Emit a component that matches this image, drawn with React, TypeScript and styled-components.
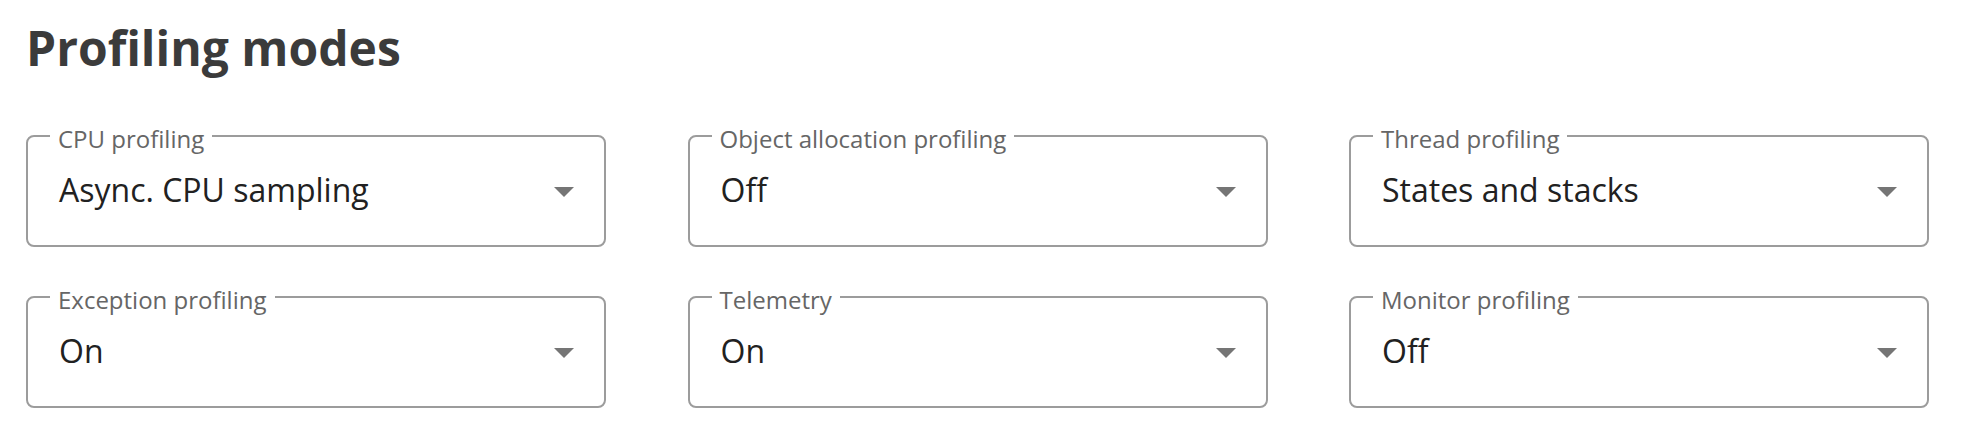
import React from "react";
import styled, { createGlobalStyle } from "styled-components";

const GlobalStyle = createGlobalStyle`
  html, body {
    margin: 0;
    padding: 0;
    background: #ffffff;
  }
  body {
    font-family: "Open Sans", "Noto Sans", sans-serif;
  }
`;

const Page = styled.main`
  padding: 19px 26px 0;
  box-sizing: border-box;
  width: 100%;
`;

const Heading = styled.h2`
  margin: 0;
  font-family: "Open Sans", sans-serif;
  font-weight: 700;
  font-size: 48px;
  line-height: 58px;
  color: #3b3b3b;
`;

const Grid = styled.div`
  margin-top: 44px;
  display: grid;
  grid-template-columns: repeat(3, 580px);
  column-gap: 81.5px;
  row-gap: 35px;
`;

const Field = styled.fieldset`
  margin: 0;
  padding: 0;
  min-width: 0;
  border: 2px solid #9c9c9c;
  border-radius: 8px;
`;

const Legend = styled.legend`
  margin-left: 22px;
  padding: 6px 8px 0;
  font-family: "Open Sans", sans-serif;
  font-size: 24px;
  line-height: 24px;
  color: #666666;
`;

const ValueRow = styled.div`
  display: flex;
  align-items: center;
  justify-content: space-between;
  padding: 17px 30px 33px 31px;
`;

const Value = styled.span`
  font-family: "Open Sans", sans-serif;
  font-size: 32px;
  line-height: 44px;
  color: #212121;
  white-space: nowrap;
`;

const Arrow = styled.svg`
  flex: none;
  width: 20px;
  height: 10px;
  margin-top: 3px;
  fill: #757575;
`;

const fields = [
  { label: "CPU profiling", value: "Async. CPU sampling" },
  { label: "Object allocation profiling", value: "Off" },
  { label: "Thread profiling", value: "States and stacks" },
  { label: "Exception profiling", value: "On" },
  { label: "Telemetry", value: "On" },
  { label: "Monitor profiling", value: "Off" },
];

function SelectField({ label, value }: { label: string; value: string }) {
  return (
    <Field>
      <Legend>{label}</Legend>
      <ValueRow>
        <Value>{value}</Value>
        <Arrow viewBox="0 0 20 10" aria-hidden="true">
          <path d="M0 0 L10 10 L20 0 Z" />
        </Arrow>
      </ValueRow>
    </Field>
  );
}

export default function App() {
  return (
    <>
      <GlobalStyle />
      <Page>
        <Heading>Profiling modes</Heading>
        <Grid>
          {fields.map((f) => (
            <SelectField key={f.label} label={f.label} value={f.value} />
          ))}
        </Grid>
      </Page>
    </>
  );
}
